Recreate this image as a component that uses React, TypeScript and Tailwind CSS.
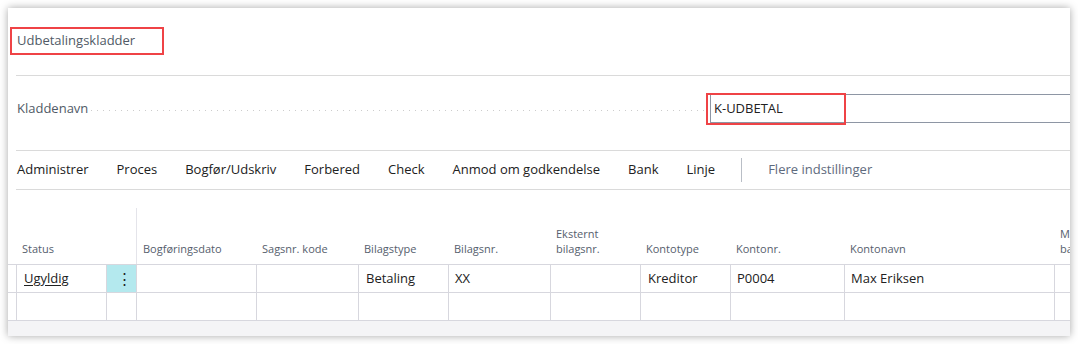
import React from "react";

const cols =
  "grid grid-cols-[8px_90px_30px_120px_102px_90px_102px_90px_90px_114px_210px_60px]";

export default function App() {
  const actions = [
    "Administrer",
    "Proces",
    "Bogfør/Udskriv",
    "Forbered",
    "Check",
    "Anmod om godkendelse",
    "Bank",
    "Linje",
  ];
  const cell = "border-l border-b border-[#d7d7de] h-[28px] flex items-center pl-[6px] whitespace-nowrap overflow-hidden";
  return (
    <div
      className="w-[1078px] h-[344px] bg-white p-2 overflow-hidden text-[#212121]"
      style={{ fontFamily: '"Open Sans", "Noto Sans", sans-serif' }}
    >
      <div className="w-full h-full bg-white shadow-[0_0_8px_rgba(0,0,0,0.35)] flex flex-col overflow-hidden">
        {/* Title */}
        <div className="h-[67px] pt-[19px] pl-[2px]">
          <div className="w-[154px] h-[28px] border-2 border-[#ef4346] flex items-center pl-[5px] text-[13px] text-[#505a66]">
            Udbetalingskladder
          </div>
        </div>
        <div className="ml-2 h-px bg-[#dadada] shrink-0" />

        {/* Kladdenavn */}
        <div className="pt-[18px] pb-[27px] flex shrink-0">
          <div className="w-[702px] pl-[9px] flex items-center pr-[5px]">
            <span className="text-[13px] text-[#505a66]">Kladdenavn</span>
            <div className="flex-1 h-px ml-[3px] mt-[3px] bg-[linear-gradient(to_right,#cccccc_1px,transparent_1px)] bg-[length:6px_1px] bg-repeat-x" />
          </div>
          <div className="relative flex-1 h-[29px] border border-r-0 border-[#8e96a4] flex items-center pl-[3px] text-[13px]">
            K-UDBETAL
            <div className="absolute -left-[5px] -top-[2px] w-[140px] h-[32px] border-2 border-[#ef4346]" />
          </div>
        </div>
        <div className="ml-2 h-px bg-[#dadada] shrink-0" />

        {/* Actions */}
        <div className="h-[38px] pl-[9px] flex items-center gap-[28px] text-[13px] shrink-0">
          {actions.map((a) => (
            <span key={a} className="whitespace-nowrap">
              {a}
            </span>
          ))}
          <div className="w-px h-[24px] bg-[#b9bec6] -ml-[2px] mr-[-2px]" />
          <span className="text-[#5e6a7d] whitespace-nowrap">Flere indstillinger</span>
        </div>
        <div className="ml-2 h-px bg-[#dadada] shrink-0" />

        {/* Table header */}
        <div className={`${cols} h-[75px] text-[11px] leading-[15px] text-[#56606d] shrink-0`}>
          <div className="border-b border-[#d7d7de]" />
          <div className="col-span-2 border-b border-[#d7d7de] flex items-end pl-[6px] pb-[8px]">Status</div>
          <div className="border-b border-[#d7d7de] flex flex-col justify-end">
            <div className="h-[56px] border-l border-[#e4e4ea] flex items-end pl-[6px] pb-[8px]">Bogføringsdato</div>
          </div>
          <div className="border-b border-[#d7d7de] flex items-end pl-[6px] pb-[8px]">Sagsnr. kode</div>
          <div className="border-b border-[#d7d7de] flex items-end pl-[6px] pb-[8px]">Bilagstype</div>
          <div className="border-b border-[#d7d7de] flex items-end pl-[6px] pb-[8px]">Bilagsnr.</div>
          <div className="border-b border-[#d7d7de] flex items-end pl-[6px] pb-[8px]">
            Eksternt
            <br />
            bilagsnr.
          </div>
          <div className="border-b border-[#d7d7de] flex items-end pl-[6px] pb-[8px]">Kontotype</div>
          <div className="border-b border-[#d7d7de] flex items-end pl-[6px] pb-[8px]">Kontonr.</div>
          <div className="border-b border-[#d7d7de] flex items-end pl-[6px] pb-[8px]">Kontonavn</div>
          <div className="border-b border-[#d7d7de] flex items-end pl-[6px] pb-[8px] whitespace-nowrap">
            Modtagers
            <br />
            bankkonto
          </div>
        </div>

        {/* Row 1 */}
        <div className={`${cols} text-[13px] shrink-0`}>
          <div className="border-b border-[#d7d7de] h-[28px]" />
          <div className={cell}>
            <span className="underline underline-offset-2 pl-px">Ugyldig</span>
          </div>
          <div className={`${cell} bg-[#b4e9ee] justify-center pl-0 text-[15px]`}>⋮</div>
          <div className={cell} />
          <div className={cell} />
          <div className={`${cell} pl-[7px]`}>Betaling</div>
          <div className={cell}>XX</div>
          <div className={cell} />
          <div className={`${cell} pl-[7px]`}>Kreditor</div>
          <div className={cell}>P0004</div>
          <div className={cell}>Max Eriksen</div>
          <div className={cell} />
        </div>
        {/* Row 2 */}
        <div className={`${cols} text-[13px] shrink-0`}>
          <div className="border-b border-[#d7d7de] h-[28px]" />
          {Array.from({ length: 11 }).map((_, i) => (
            <div key={i} className={cell} />
          ))}
        </div>
        <div className="flex-1 bg-[#f4f4f6]" />
      </div>
    </div>
  );
}
